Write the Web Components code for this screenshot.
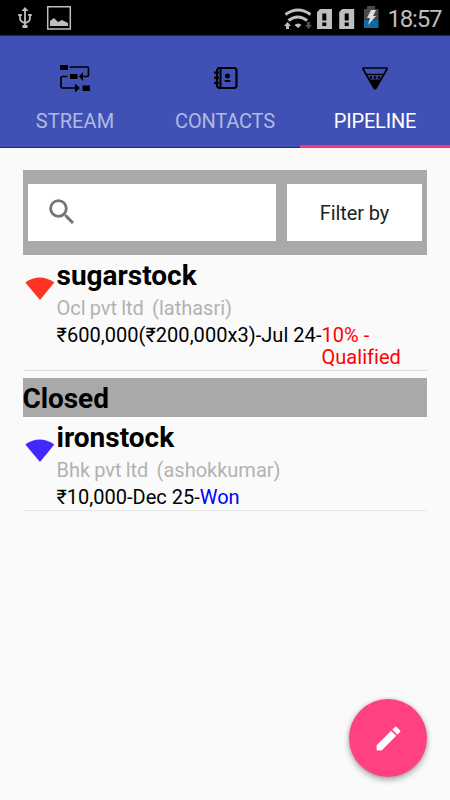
<!DOCTYPE html>
<html lang="en"><head><meta charset="utf-8"><title>Pipeline</title>
<style>html,body{margin:0;height:100%;background:#fafafa;font-family:Roboto,"Noto Sans",sans-serif;overflow:hidden}</style></head>
<body><pipeline-app></pipeline-app>
<script>
const define=(name,html)=>customElements.define(name,class extends HTMLElement{
  constructor(){super();const t=document.createElement('template');t.innerHTML=html;this.attachShadow({mode:'open'}).append(t.content.cloneNode(true));}
});
define('status-bar',`<style>:host{display:flex;height:36px;box-sizing:border-box;border-bottom:1px solid #20295b;background:#000;color:#bebebe}svg{display:block;width:384px;height:35px;flex:none}span{font-size:24px;line-height:38px;letter-spacing:-1.2px;margin-left:3.500px;white-space:nowrap}</style>
<svg viewBox="0 0 384 35"><g fill="none" stroke="#bebebe" stroke-width="1.8"><path d="M25 10v17M20 14v4q0 4 5 5M30 14v4q0 4-5 5M18.300 15h3.500M28.200 15h3.500" /><path d="M47.700 6.700h22.600v22.300H47.700z" stroke-width="1.500"/></g>
<path d="M25 7l3.500 4h-7zM22.500 25h5v3h-5zM50 26v-5l4-3 4 4 4-2 6 3v3z" fill="#bebebe"/>
<g fill="none" stroke="#bebebe" stroke-width="3"><path d="M285.500 14.500q12.500-9 25 0M288.500 20.500q9.300-7 18.600 0"/></g>
<path d="M294.500 25q3.500-3 7 0l-3.500 3zM287.500 22l3.500 4h-2v3h-3v-3h-2zM320 9h12v20h-15V12zM342.200 9h12v20h-15V12z" fill="#bebebe"/><path d="M308.500 29l3.500-4h-2v-3h-3v3h-2z" fill="#505050"/>
<path d="M322.300 13.500h4v7h-4zm0 9h4v3.500h-4zM344.700 13.500h4v7h-4zm0 9h4v3.500h-4z" fill="#000"/>
<path d="M364 9h3V6h8v3h3.500v10.500H364z" fill="#4a4a4a"/><path d="M364 19.500h14.500V28H364z" fill="#126a9b"/><path d="M371 10h5l-3 6h3l-8 9 2-7h-3z" fill="#ddd"/></svg><span>18:57</span>`);
define('nav-tab',`<style>:host{display:flex;flex:1;flex-direction:column;align-items:center;height:112px;box-sizing:border-box;padding-top:26px;background:#3f51b5;color:#b2b9e1;border-bottom:1px solid #0c2b91}:host([active]){color:#fff;border-bottom:3px solid #ff3274}slot[name=icon]{display:block;height:32px}.t{font-size:20px;line-height:24px;margin-top:15px;letter-spacing:var(--track,0);white-space:nowrap}</style><slot name="icon"></slot><span class="t"><slot></slot></span>`);
define('tab-bar',`<style>:host{display:flex}svg{display:block;width:32px;height:32px}</style>
<nav-tab style="--track:.08px"><svg slot="icon" viewBox="0 0 32 32"><path d="M1 3h8v5H1zM11 12h7.500v5H11zM23.500 23.500H31v5.500h-7.500zM20 14.500l4-4.500v9zM16 21.500v9l5-4.500z"/><path d="M10.500 5H28q1.500 0 1.500 1.500V13q0 1.500-1.500 1.500h-4M8.500 14.500h-5Q2 14.500 2 16v8.500Q2 26 3.500 26H16" fill="none" stroke="#000" stroke-width="1.700"/></svg>STREAM</nav-tab>
<nav-tab style="--track:-.17px"><svg slot="icon" viewBox="0 0 32 32"><rect x="8" y="6" width="19.500" height="20" rx="2.500" fill="none" stroke="#000" stroke-width="2.200"/><path d="M11.500 6v20M5 10.500h5M5 15.800h5M5 21h5" fill="none" stroke="#000" stroke-width="2"/><circle cx="18.500" cy="14" r="2.500"/><rect x="15.500" y="18" width="6" height="2" rx="1"/></svg>CONTACTS</nav-tab>
<nav-tab active style="--track:-.17px"><svg slot="icon" viewBox="0 0 32 32"><path d="M4.500 6h23Q28.500 6 28 7L17 26q-1 1.500-2 0L4 7q-.5-1 .5-1z" fill="none" stroke="#000" stroke-width="1.700"/><path d="M8 12.500h16M10.500 18.200h11" stroke="#000" stroke-width="1.500"/><path d="M11 18.500h10.500L16 28z"/><circle cx="12" cy="15.500" r="1.400"/><circle cx="16" cy="15.500" r="1.400"/><circle cx="20" cy="15.500" r="1.400"/></svg>PIPELINE</nav-tab>`);
define('search-panel',`<style>:host{display:flex;gap:11px;height:84.500px;box-sizing:border-box;padding:14px 5px 13px 5.500px;background:#a9a9a9;color:#222}.s,.f{background:#fff;height:57px;display:flex;align-items:center}.s{width:248px;box-sizing:border-box;padding-left:16.500px}.f{flex:1;justify-content:center;font-size:20px;letter-spacing:-.1px;white-space:nowrap}svg{width:34px;height:34px;margin-top:-1px}</style><div class="s"><svg viewBox="0 0 24 24" fill="#757575"><path d="M15.500 14h-.79l-.28-.27A6.470 6.470 0 0 0 16 9.500 6.500 6.500 0 1 0 9.500 16c1.610 0 3.090-.59 4.230-1.570l.27.28v.79l5 4.990L20.490 19zm-6 0C7.010 14 5 11.990 5 9.500S7.010 5 9.500 5 14 7.010 14 9.500 11.990 14 9.500 14z"/></svg></div><div class="f">Filter by</div>`);
define('section-title',`<style>:host{display:block;background:#a9a9a9;height:38.500px;line-height:41px;font-size:28px;font-weight:700;letter-spacing:-.08px;color:#000;white-space:nowrap}</style><slot></slot>`);
define('deal-item',`<style>:host{display:flex;box-sizing:border-box;border-bottom:1px solid var(--line,#dcdcdc);padding-top:6px;color:#000}svg{flex:none;width:34px;height:50px}.c{flex:1;min-width:0;white-space:nowrap}.n{font-size:28px;font-weight:700;line-height:30px}.o{font-size:20px;line-height:24px;margin-top:5px;color:#b2b2b2;word-spacing:-.85px}.a{display:flex;font-size:20px;line-height:22.500px;margin-top:4px;letter-spacing:var(--at,0)}slot[name=status]{color:var(--status)}</style>
<svg viewBox="0 0 34 50"><path d="M2.300 21.500Q16.500 11.500 31.300 21.500L17 39z" fill="var(--mark)"/></svg><div class="c"><div class="n"><slot name="name"></slot></div><div class="o"><slot name="org"></slot></div><div class="a"><slot></slot><slot name="status"></slot></div></div>`);
define('compose-button',`<style>:host{position:fixed;left:349px;top:699px;width:78px;height:78px;border-radius:50%;background:#ff4081;box-shadow:0 3px 6px rgba(0,0,0,.32),0 0 4px rgba(0,0,0,.14);display:grid;place-items:center}svg{width:31px;height:31px}</style><svg viewBox="0 0 24 24" fill="#fff" stroke="#fff" stroke-width=".3"><path d="M3 17.250V21h3.750L17.810 9.940l-3.750-3.750zM20.710 7.040a1 1 0 0 0 0-1.410l-2.340-2.340a1 1 0 0 0-1.410 0l-1.830 1.830 3.750 3.750z"/></svg>`);
define('pipeline-app',`<style>:host{display:block}main{display:block;padding:22px 23px 0 22.500px}section-title{margin-top:7.500px}</style>
<status-bar></status-bar><tab-bar></tab-bar><main><search-panel></search-panel>
<deal-item style="height:116px;--mark:#ff3322;--status:#f00;--at:.04px"><span slot="name">sugarstock</span><span slot="org">Ocl pvt ltd&nbsp; (lathasri)</span><span>₹600,000(₹200,000x3)-Jul 24-</span><span slot="status">10% -<br>Qualified</span></deal-item>
<section-title>Closed</section-title>
<deal-item style="height:94px;--mark:#4028ff;--status:#00f;--line:#e6e6e6"><span slot="name">ironstock</span><span slot="org">Bhk pvt ltd&nbsp; (ashokkumar)</span><span>₹10,000-Dec 25-</span><span slot="status">Won</span></deal-item></main><compose-button></compose-button>`);
</script></body></html>
